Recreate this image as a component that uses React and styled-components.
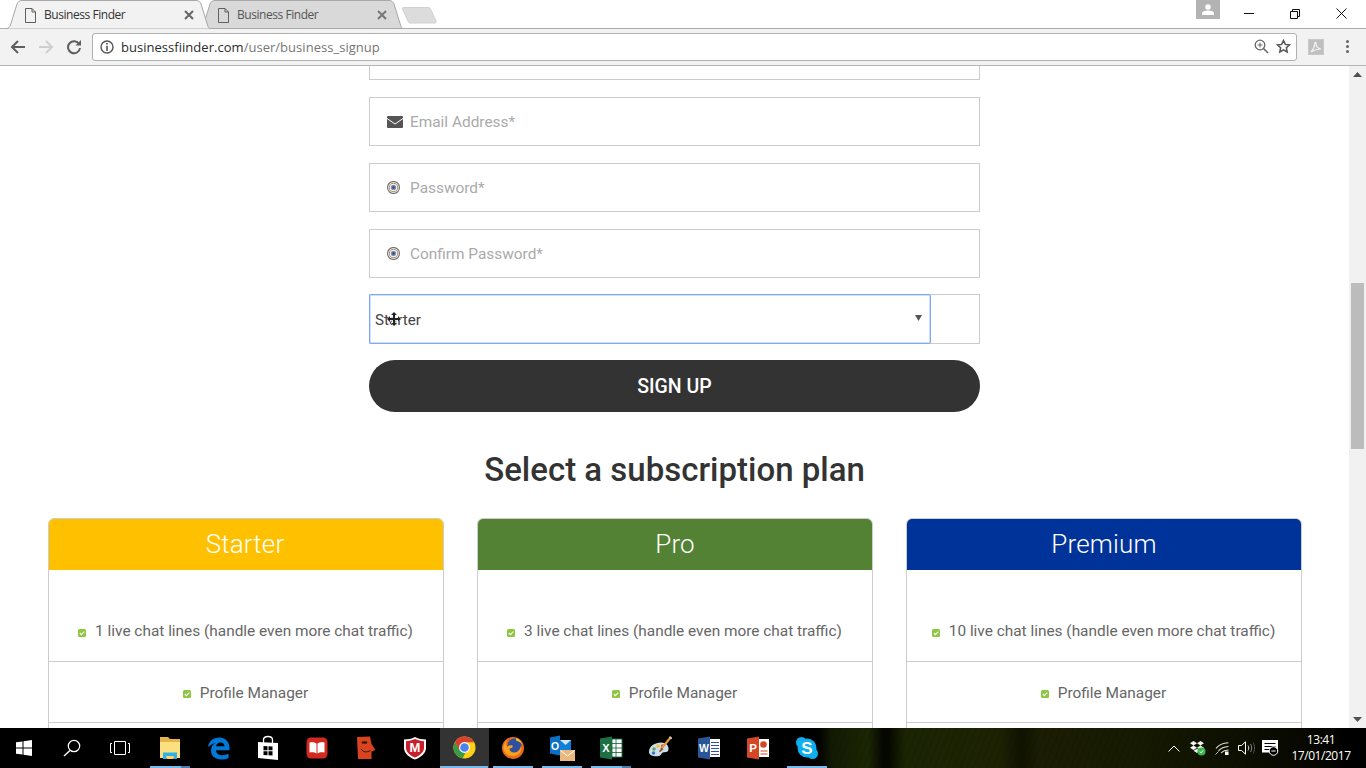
import React from 'react';
import styled, { createGlobalStyle } from 'styled-components';

const Global = createGlobalStyle`
  html, body { margin: 0; padding: 0; overflow: hidden; background: #fff; }
  * { box-sizing: border-box; }
`;

const Screen = styled.div`
  width: 1366px; height: 768px; display: flex; flex-direction: column; overflow: hidden;
  font-family: Roboto, "Open Sans", sans-serif;
`;

/* ---------- browser chrome ---------- */
const TabStrip = styled.div`
  height: 29px; flex: none; display: flex; align-items: flex-start; padding-left: 6px;
  background: #fff; border-bottom: 1px solid #adadad;
`;
const Tab = styled.div`
  position: relative; width: 205px; height: 29px; flex: none; display: flex; align-items: center;
  padding: 0 0 0 19px; margin-left: ${p => (p.$active ? '0' : '-12px')};
  z-index: ${p => (p.$active ? 2 : 1)};
`;
const TabShape = styled.svg`
  position: absolute; inset: 0; width: 205px; height: 29px; z-index: -1;
`;
const TabFavicon = styled.svg`
  width: 11px; height: 15px; flex: none; margin-right: 8px; margin-top: 1px;
`;
const TabTitle = styled.span`
  font: 12px/16px "Open Sans", sans-serif; width: 139px; flex: none; white-space: nowrap;
  letter-spacing: -0.45px; color: ${p => (p.$active ? '#333' : '#555')};
  margin-top: 1px;
`;
const TabClose = styled.svg`
  width: 10px; height: 10px; flex: none; margin-left: 1px; margin-top: 1px;
`;
const NewTab = styled.svg`
  width: 36px; height: 18px; flex: none; margin: 6px 0 0 -3px;
`;
const StripRight = styled.div`
  margin-left: auto; display: flex; align-items: flex-start; padding-right: 2px;
`;
const ProfileBadge = styled.div`
  width: 24px; height: 19px; background: #b3b3b3; margin-right: 6px;
  display: flex; align-items: center; justify-content: center;
`;
const WinButton = styled.div`
  width: 46px; height: 27px; display: flex; align-items: center; justify-content: center;
`;

const Toolbar = styled.div`
  height: 37px; flex: none; display: flex; align-items: center; padding: 0 16px 1px 4px;
  background: #f2f2f2; border-bottom: 1px solid #b4b4b4;
`;
const NavButton = styled.div`
  width: 28px; height: 28px; flex: none; display: flex; align-items: center; justify-content: center;
`;
const Omnibox = styled.div`
  flex: 1; height: 28px; margin-left: 4px; display: flex; align-items: center; padding: 0 5px 0 7px;
  background: #fff; border: 1px solid #b0b0b0; border-radius: 3px;
`;
const UrlText = styled.div`
  flex: 1; margin-left: 7px; font: 13px/18px "Open Sans", sans-serif; color: #767676;
  letter-spacing: 0.03px; font-variant-ligatures: none; white-space: nowrap;
`;
const UrlHost = styled.span`color: #2b2b2b;`;
const OmniIcon = styled.svg`
  flex: none; margin-left: ${p => p.$gap || 0}px;
`;
const PdfBadge = styled.div`
  width: 16px; height: 16px; flex: none; margin-left: 11px; background: #bfbfbf; border: 1px solid #c9c9c9;
  display: flex; align-items: center; justify-content: center;
`;
const Kebab = styled.div`
  width: 4px; flex: none; margin-left: 22px; display: flex; flex-direction: column; gap: 2px;
`;
const KebabDot = styled.span`
  width: 3px; height: 3px; background: #666; border-radius: 50%; display: block;
`;

/* ---------- viewport ---------- */
const Viewport = styled.div`
  flex: 1; min-height: 0; display: flex;
`;
const Page = styled.main`
  width: 1349px; flex: none; overflow: hidden; background: #fff;
`;
const Form = styled.form`
  width: 611px; margin: -35px auto 0; display: flex; flex-direction: column; gap: 17px;
`;
const Field = styled.div`
  height: ${p => (p.$bare ? 50 : 49)}px; margin-top: ${p => (p.$bare ? -1 : 0)}px;
  border: 1px solid #ccc; display: flex; align-items: center; padding-left: ${p => (p.$bare ? 0 : 17)}px;
  background: #fff;
`;
const FieldIcon = styled.span`
  width: 23px; flex: none; display: flex; align-items: center;
`;
const Placeholder = styled.span`
  font-size: 15.4px; color: #aaa;
`;
const PlanSelect = styled.div`
  position: relative; width: 562px; height: 50px; margin: -1px; display: flex; align-items: center; padding-left: 5px;
  border: 1px solid #7fa8f2; border-radius: 2px; box-shadow: inset 0 0 0 1px rgba(165, 198, 250, .55);
  font-size: 15.2px; color: #444; padding-top: 2px;
`;
const SelectCaret = styled.svg`
  margin-left: auto; margin-right: 8px; margin-top: -4px;
`;
const MoveCursor = styled.svg`
  position: absolute; left: 16px; top: 16px;
`;
const SignUp = styled.button`
  height: 52px; margin-top: -1px; border: 0; border-radius: 26px; background: #333; color: #fff;
  font: 500 19.5px Roboto, sans-serif; padding: 0; cursor: pointer;
`;
const Heading = styled.h2`
  margin: 38px 0 28px; font: 500 33px/40px Roboto, sans-serif; color: #333; text-align: center;
`;
const Plans = styled.div`
  display: grid; grid-template-columns: repeat(3, 396px); column-gap: 33px; padding-left: 48px;
`;
const Card = styled.section`
  border: 1px solid #ccc; border-radius: 6px 6px 0 0; overflow: hidden;
`;
const CardHead = styled.div`
  height: 51px; background: ${p => p.$color}; color: #fff; text-align: center;
  font: 300 26px/50px Roboto, sans-serif; letter-spacing: 0.15px; padding-right: ${p => p.$nudge}px;
`;
const FeatureRow = styled.div`
  height: ${p => p.$h}px; display: flex; align-items: ${p => (p.$low ? 'flex-end' : 'center')}; justify-content: center;
  padding: ${p => (p.$low ? '0 1px 21px 0' : '2px 1px 0 0')}; border-bottom: 1px solid #ccc;
  font-size: 15.4px; line-height: 18px; color: #666; gap: 9px;
`;
const Check = styled.svg`
  flex: none; margin-top: 2px; align-self: ${p => (p.$low ? 'flex-end' : 'center')};
  margin-bottom: ${p => (p.$low ? 3 : 0)}px;
`;

/* ---------- scrollbar ---------- */
const Scrollbar = styled.div`
  width: 17px; flex: none; background: #f1f1f1; display: flex; flex-direction: column;
`;
const ScrollArrow = styled.div`
  height: 17px; flex: none; display: flex; align-items: center; justify-content: center;
  margin-top: ${p => (p.$bottom ? 'auto' : 0)};
`;
const ScrollThumb = styled.div`
  width: 13px; height: 166px; margin: 200px 2px 0; background: #bcbcbc; flex: none;
`;

/* ---------- taskbar ---------- */
const Taskbar = styled.footer`
  height: 40px; flex: none; display: flex; align-items: stretch; color: #fff;
  background:
    repeating-linear-gradient(112deg, rgba(0,0,0,.07) 0 2px, transparent 2px 6px) 820px 0 no-repeat,
    linear-gradient(90deg, #000 0, #000 818px, #121a02 832px, #1b2603 868px, #040500 884px, #070900 889px, #1b2503 905px, #1d2203 1000px, #0f1300 1022px, #1b1e02 1040px, #161a02 1140px, #0d0f00 1240px, #060600 1320px, #000 1345px);
`;
const SysButton = styled.div`
  width: 48px; flex: none; display: flex; align-items: center; justify-content: center;
`;
const TaskSlot = styled.div`
  position: relative; width: 49px; flex: none; display: flex; align-items: center; justify-content: center;
  padding: 0 1px 1px 0; background: ${p => (p.$active ? '#333' : 'transparent')};
  &::after {
    content: ''; display: ${p => (p.$open ? 'block' : 'none')}; position: absolute; bottom: 0; height: 2px;
    left: ${p => (p.$active ? 0 : 4)}px; right: ${p => (p.$active ? 1 : 5)}px;
    background: ${p => (p.$split
      ? 'linear-gradient(90deg, #76b9ed 0 31px, #4b7ea8 31px)'
      : '#76b9ed')};
  }
`;
const TaskList = styled.div`
  display: flex; margin-left: 2px;
`;
const Tray = styled.div`
  margin-left: auto; display: flex; align-items: stretch; padding-right: 6px;
`;
const TraySlot = styled.div`
  width: 24px; display: flex; align-items: center; justify-content: center;
`;
const Clock = styled.div`
  width: 78px; display: flex; flex-direction: column; align-items: center; justify-content: center;
  font: 12px/16px "Open Sans", sans-serif; color: #fff; letter-spacing: -0.45px; padding-bottom: 1px;
`;

/* ---------- drawings ---------- */
const TabOutline = ({ active }) => (
  <TabShape viewBox="0 0 205 29">
    <path
      d={`M.5 28.5C2.5 28.5 3.5 27 4.5 25L11 4C12 1.6 13.5.5 16 .5H190C192.5.5 194 1.6 195 4L201.500 25C202 27 203 28.5 204.5 28.5${active ? '' : 'Z'}`}
      fill={active ? '#f2f2f2' : '#d9d9d9'} stroke="#a8a8a8" />
  </TabShape>
);
const DocIcon = () => (
  <TabFavicon viewBox="0 0 11 15">
    <path d="M.5.5H7L10.5 4V14.5H.5ZM7 .5V4H10.5" fill="none" stroke="#5f5f5f" />
  </TabFavicon>
);
const CloseX = ({ color }) => (
  <TabClose viewBox="0 0 10 10">
    <path d="M1 1L9 9M9 1L1 9" stroke={color} strokeWidth="2" />
  </TabClose>
);
const BackArrow = ({ color }) => (
  <svg width="16" height="14" viewBox="0 0 16 14">
    <path d="M15 7H2.5M8 1L2 7l6 6" fill="none" stroke={color} strokeWidth="2" />
  </svg>
);
const ForwardArrow = ({ color }) => (
  <svg width="16" height="14" viewBox="0 0 16 14">
    <path d="M1 7H13.5M8 1l6 6-6 6" fill="none" stroke={color} strokeWidth="2" />
  </svg>
);
const Reload = () => (
  <svg width="16" height="16" viewBox="0 0 16 16">
    <path d="M13.2 5.2A6 6 0 1 0 14 9" fill="none" stroke="#5f5f5f" strokeWidth="2" />
    <path d="M9.5 6.5H15V1Z" fill="#5f5f5f" />
  </svg>
);
const InfoIcon = () => (
  <svg width="14" height="14" viewBox="0 0 14 14" style={{ flex: 'none' }}>
    <circle cx="7" cy="7" r="6" fill="none" stroke="#555" strokeWidth="1.4" />
    <path d="M6.2 3h1.6v1.6H6.2zM6.2 5.8h1.6V11H6.2z" fill="#555" />
  </svg>
);

const tasks = [
  { id: 'explorer', open: true, split: true, icon: (
    <svg width="24" height="24" viewBox="0 0 24 24">
      <path d="M2 1h8l2 2h10v4H2z" fill="#e2b64b" />
      <rect x="2" y="6" width="20" height="16" fill="#fbdf80" />
      <path d="M5 23v-6.500h14V23h-3.500v-3h-7v3z" fill="#2fb0ea" />
      <rect x="8.500" y="20" width="7" height="3" fill="#f6d66a" />
    </svg>) },
  { id: 'edge', icon: (
    <svg width="24" height="24" viewBox="0 0 24 24">
      <path fill="#0078d7" d="M1 11C2 5 6.500 1.500 12 1.500c6.500 0 10.500 4.500 10.500 10.500v2.200H9c.3 3.300 2.800 5 6 5 2.400 0 4.500-.6 6.500-1.700v4.500c-2 1-4.300 1.500-7 1.500-6.500 0-10.500-3.700-10.500-9 0-3.300 1.500-6 4.500-7.800C6 7.500 3.500 9 1 11zM9 10.300h8.500c0-2.300-1.700-3.800-4-3.800-2.400 0-4 1.600-4.500 3.800z" />
    </svg>) },
  { id: 'store', icon: (
    <svg width="24" height="26" viewBox="0 0 24 26">
      <path d="M7.500 8V5c0-2.200 2-3.500 4.500-3.500S16.500 2.800 16.500 5v3" fill="none" stroke="#fff" strokeWidth="1.300" />
      <path d="M2 7l20 1v17L2 23z" fill="#fff" />
      <path d="M7.500 11l4 .2v4h-4zM12.500 11.200l4 .2v3.800h-4zM7.500 16.200h4v4l-4-.2zM12.500 16.200h4v4.200l-4-.2z" fill="#000" />
    </svg>) },
  { id: 'reader', icon: (
    <svg width="22" height="22" viewBox="0 0 22 22">
      <rect width="21" height="21" x=".5" y=".5" rx="4.500" fill="#d12a20" />
      <path d="M10.500 6.500C8.500 5 6 5 3.500 5.500v10c2.500-.5 5-.5 7 1zM11.500 6.500c2-1.500 4.500-1.500 7-1v10c-2.500-.5-5-.5-7 1z" fill="#fff" />
    </svg>) },
  { id: 'face', icon: (
    <svg width="20" height="24" viewBox="0 0 20 24">
      <path d="M1 1l13-.5 1.500 7.500 4 6-4 1.500V23H2z" fill="#d9431e" />
      <ellipse cx="8.500" cy="6.500" rx="3" ry="1.300" fill="#2a1b12" />
      <path d="M5 13c2.500 3.500 6 3.500 9.500 1.500" fill="none" stroke="#2a1b12" strokeWidth="1" />
    </svg>) },
  { id: 'mcafee', icon: (
    <svg width="24" height="24" viewBox="0 0 24 24">
      <path d="M12 1c3.500 1.800 7 2.500 11 2.500V12c0 5-5 9.500-11 11.500C6 21.500 1 17 1 12V3.500C5 3.500 8.500 2.800 12 1z" fill="#fff" />
      <path d="M12 3c3 1.300 6 2 9 2.200V12c0 4-4.300 7.800-9 9.600C7.300 19.800 3 16 3 12V5.200C6 5 9 4.300 12 3z" fill="#c8202a" />
      <text x="12" y="16" textAnchor="middle" fontFamily="Liberation Sans, sans-serif" fontWeight="700" fontSize="13" fill="#fff">M</text>
    </svg>) },
  { id: 'chrome', open: true, active: true, icon: (
    <svg width="23" height="23" viewBox="0 0 24 24">
      <circle cx="12" cy="12" r="11.500" fill="#fcd116" />
      <path d="M2 6.300A11.500 11.500 0 0 0 10 23.300L14.500 14.500H7.500z" fill="#3a9a45" />
      <path d="M12 .5A11.500 11.500 0 0 1 22 6.500H12L7 14.800 2 6.300A11.500 11.500 0 0 1 12 .5z" fill="#d8402f" />
      <circle cx="12" cy="12" r="5.700" fill="#fff" />
      <circle cx="12" cy="12" r="4.500" fill="#4a84e8" />
    </svg>) },
  { id: 'firefox', open: true, icon: (
    <svg width="24" height="24" viewBox="0 0 24 24">
      <circle cx="12" cy="12" r="11" fill="#e9691d" />
      <circle cx="13.500" cy="9.500" r="7" fill="#2f4f9f" />
      <path d="M6 3c-1 3-1.500 6 .5 8 .5-2 3-2 5-1.500 1 2-1 3-3 3 0 3 3 5 6 4 3-1 5-3.500 5-6.500 2 4-1 10-7.500 10C6 20 2 16 2.500 10.500 3 8 4.500 5 6 3z" fill="#f7a11e" />
      <path d="M15 2c3 1 5 3 6 6-2-2-4-3-6-3.500z" fill="#f7c22e" />
    </svg>) },
  { id: 'outlook', open: true, icon: (
    <svg width="26" height="26" viewBox="0 0 26 26">
      <path d="M1 2.500L11 .5v20L1 18.500z" fill="#0a72c6" />
      <rect x="11" y="5" width="11" height="10" fill="#0f7fd8" />
      <path d="M11 5h11l-5.500 5z" fill="#cfe6f8" />
      <text x="6" y="14.500" textAnchor="middle" fontFamily="Liberation Sans, sans-serif" fontWeight="700" fontSize="10.500" fill="#fff">O</text>
      <rect x="11" y="15" width="15" height="11" fill="#ebb87e" />
      <path d="M11.500 15.500l7 5.500 7-5.500" fill="none" stroke="#fff" strokeWidth="1" />
    </svg>) },
  { id: 'excel', open: true, split: true, icon: (
    <svg width="24" height="24" viewBox="0 0 24 24">
      <path d="M1 2.500L13 .5v23L1 21.500z" fill="#1d7044" />
      <rect x="13" y="3" width="10" height="18" fill="#fff" />
      <path d="M13 3h10v18H13zM17 3v18M13 7.500h10M13 12h10M13 16.500h10" fill="none" stroke="#1d7044" strokeWidth=".9" />
      <text x="7" y="16" textAnchor="middle" fontFamily="Liberation Sans, sans-serif" fontWeight="700" fontSize="11" fill="#fff">X</text>
    </svg>) },
  { id: 'paint', icon: (
    <svg width="24" height="24" viewBox="0 0 24 24">
      <path d="M1 16C1 10 7 6.500 13 6.500c5 0 8 3 7.500 7-.5 3-3.500 2.500-5.500 3-2 .5-1.500 3-4 3.500C7 20.800 1 20 1 16z" fill="#cfdcec" />
      <circle cx="6" cy="13" r="1.700" fill="#5aa84a" />
      <circle cx="10" cy="10" r="1.700" fill="#e4c534" />
      <circle cx="14.500" cy="10" r="1.700" fill="#dd4b39" />
      <circle cx="5.500" cy="17" r="1.700" fill="#3a77c8" />
      <path d="M23 1L13 13" stroke="#e49a3c" strokeWidth="2.200" />
      <path d="M21.500 .8L23.800 2.600" stroke="#d0d0d0" strokeWidth="1.500" />
      <path d="M13.500 11.500l2 1.700-3.500 3-1-.8z" fill="#8a5a2b" />
    </svg>) },
  { id: 'word', icon: (
    <svg width="24" height="24" viewBox="0 0 24 24">
      <path d="M1 2.500L13 .5v23L1 21.500z" fill="#2b579a" />
      <rect x="13" y="3" width="10" height="18" fill="#fff" />
      <path d="M14 6.500h8M14 9.500h8M14 12.500h8M14 15.500h8M14 18.500h8" stroke="#2b579a" strokeWidth="1.100" />
      <text x="7" y="16" textAnchor="middle" fontFamily="Liberation Sans, sans-serif" fontWeight="700" fontSize="10.500" fill="#fff">W</text>
    </svg>) },
  { id: 'powerpoint', icon: (
    <svg width="24" height="24" viewBox="0 0 24 24">
      <path d="M1 2.500L13 .5v23L1 21.500z" fill="#d24726" />
      <rect x="13" y="3" width="10" height="18" fill="#fff" />
      <circle cx="17.500" cy="8.500" r="3.300" fill="#d24726" />
      <path d="M14.500 15h7M14.500 18h7" stroke="#d24726" strokeWidth="1.200" />
      <text x="7" y="16" textAnchor="middle" fontFamily="Liberation Sans, sans-serif" fontWeight="700" fontSize="11.500" fill="#fff">P</text>
    </svg>) },
  { id: 'skype', open: true, icon: (
    <svg width="24" height="24" viewBox="0 0 24 24">
      <circle cx="12" cy="12" r="9.500" fill="#0eaff0" />
      <circle cx="6.500" cy="6.500" r="5.500" fill="#0eaff0" />
      <circle cx="17.500" cy="17.500" r="5.500" fill="#0eaff0" />
      <text x="12" y="18" textAnchor="middle" fontFamily="Liberation Sans, sans-serif" fontWeight="700" fontSize="17" fill="#fff">S</text>
    </svg>) },
];

const plans = [
  { name: 'Starter', color: '#ffc000', lines: 1, nudge: 2 },
  { name: 'Pro', color: '#548235', lines: 3, nudge: 0 },
  { name: 'Premium', color: '#003399', lines: 10, nudge: 0 },
];

const CheckBox = ({ low }) => (
  <Check $low={low} width="8" height="8" viewBox="0 0 8 8">
    <rect width="8" height="8" rx="1.500" fill="#8dc63f" />
    <path d="M1.800 4l1.600 1.600L6.300 2.600" fill="none" stroke="#fff" strokeWidth="1.100" />
  </Check>
);
const Envelope = () => (
  <svg width="16" height="12" viewBox="0 0 16 12">
    <rect width="16" height="12" rx="1" fill="#555" />
    <path d="M0 2.500L8 8l8-5.500" fill="none" stroke="#fff" strokeWidth="1" />
  </svg>
);
const Target = () => (
  <svg width="13" height="13" viewBox="0 0 13 13">
    <circle cx="6.500" cy="6.500" r="6" fill="#f1ece6" stroke="#757575" strokeWidth="1.100" />
    <circle cx="6.500" cy="6.500" r="4.100" fill="#fff" stroke="#b08a62" strokeWidth="1" />
    <circle cx="6.500" cy="6.500" r="2.700" fill="#6f8fc4" />
    <circle cx="6.500" cy="6.500" r="1.300" fill="#4e4a4a" />
  </svg>
);

export default function App() {
  return (
    <Screen>
      <Global />
      <TabStrip>
        <Tab $active>
          <TabOutline active />
          <DocIcon />
          <TabTitle $active>Business Finder</TabTitle>
          <CloseX color="#666" />
        </Tab>
        <Tab>
          <TabOutline />
          <DocIcon />
          <TabTitle>Business Finder</TabTitle>
          <CloseX color="#777" />
        </Tab>
        <NewTab viewBox="0 0 36 18">
          <path d="M2.500 1.500H27C28.500 1.500 29 2 29.500 3L35 15C35.500 16.500 35 17 33.500 17H9.500C8 17 7.500 16.500 7 15L1.500 3C1 2 1.500 1.500 2.500 1.500Z" fill="#dcdcdc" stroke="#d0d0d0" />
        </NewTab>
        <StripRight>
          <ProfileBadge>
            <svg width="12" height="11" viewBox="0 0 12 11">
              <circle cx="6" cy="3" r="2.800" fill="#fff" />
              <path d="M0 11V9c0-1.500 3-2.500 6-2.500S12 7.500 12 9v2z" fill="#fff" />
            </svg>
          </ProfileBadge>
          <WinButton>
            <svg width="10" height="1" viewBox="0 0 10 1"><rect width="10" height="1" fill="#111" /></svg>
          </WinButton>
          <WinButton>
            <svg width="10" height="10" viewBox="0 0 10 10">
              <path d="M.5 2.500h7v7h-7zM2.500 2.500v-2h7v7h-2" fill="none" stroke="#111" />
            </svg>
          </WinButton>
          <WinButton>
            <svg width="11" height="11" viewBox="0 0 11 11">
              <path d="M.5.500l10 10M10.500.500l-10 10" stroke="#111" />
            </svg>
          </WinButton>
        </StripRight>
      </TabStrip>

      <Toolbar>
        <NavButton><BackArrow color="#5f5f5f" /></NavButton>
        <NavButton><ForwardArrow color="#cfcfcf" /></NavButton>
        <NavButton><Reload /></NavButton>
        <Omnibox>
          <InfoIcon />
          <UrlText><UrlHost>businessfiinder.com</UrlHost>/user/business_signup</UrlText>
          <OmniIcon width="15" height="15" viewBox="0 0 15 15">
            <circle cx="6" cy="6" r="4.800" fill="none" stroke="#666" strokeWidth="1.300" />
            <path d="M9.500 9.500L14 14" stroke="#666" strokeWidth="1.600" />
            <path d="M3.500 6h5M6 3.500v5" stroke="#666" />
          </OmniIcon>
          <OmniIcon $gap={7} width="15" height="15" viewBox="0 0 15 15">
            <path d="M7.500 1.500l1.800 3.900 4.200.5-3.100 2.900.8 4.200-3.700-2.100-3.700 2.100.8-4.200L1.500 5.900l4.200-.5z" fill="none" stroke="#555" strokeWidth="1.500" />
          </OmniIcon>
        </Omnibox>
        <PdfBadge>
          <svg width="12" height="12" viewBox="0 0 12 12">
            <path d="M1 11c2-2 3.500-5 4-9 0-1 1-1 1 0 0 3 2 5.500 5 6-3 0-6 .5-10 3z" fill="none" stroke="#f2f2f2" strokeWidth="1.200" />
          </svg>
        </PdfBadge>
        <Kebab><KebabDot /><KebabDot /><KebabDot /></Kebab>
      </Toolbar>

      <Viewport>
        <Page>
          <Form as="div">
            <Field />
            <Field>
              <FieldIcon><Envelope /></FieldIcon>
              <Placeholder>Email Address*</Placeholder>
            </Field>
            <Field>
              <FieldIcon><Target /></FieldIcon>
              <Placeholder>Password*</Placeholder>
            </Field>
            <Field>
              <FieldIcon><Target /></FieldIcon>
              <Placeholder>Confirm Password*</Placeholder>
            </Field>
            <Field $bare>
              <PlanSelect>
                Starter
                <SelectCaret width="7" height="6" viewBox="0 0 7 6"><path d="M0 0h7L3.500 6z" fill="#555" /></SelectCaret>
                <MoveCursor width="16" height="16" viewBox="0 0 16 16">
                  <path d="M8 1L11 4H9V7H12V5L15 8L12 11V9H9V12H11L8 15L5 12H7V9H4V11L1 8L4 5V7H7V4H5Z" fill="#222" stroke="#fff" strokeWidth="1" paintOrder="stroke" />
                </MoveCursor>
              </PlanSelect>
            </Field>
            <SignUp type="button">SIGN UP</SignUp>
          </Form>
          <Heading>Select a subscription plan</Heading>
          <Plans>
            {plans.map(plan => (
              <Card key={plan.name}>
                <CardHead $color={plan.color} $nudge={plan.nudge}>{plan.name}</CardHead>
                <FeatureRow $h={92} $low>
                  <CheckBox low />
                  <span>{plan.lines} live chat lines (handle even more chat traffic)</span>
                </FeatureRow>
                <FeatureRow $h={61}>
                  <CheckBox />
                  <span>Profile Manager</span>
                </FeatureRow>
                <FeatureRow $h={61} />
              </Card>
            ))}
          </Plans>
        </Page>
        <Scrollbar>
          <ScrollArrow>
            <svg width="9" height="5" viewBox="0 0 9 5"><path d="M0 5L4.500 0 9 5z" fill="#505050" /></svg>
          </ScrollArrow>
          <ScrollThumb />
          <ScrollArrow $bottom>
            <svg width="9" height="5" viewBox="0 0 9 5"><path d="M0 0h9L4.500 5z" fill="#505050" /></svg>
          </ScrollArrow>
        </Scrollbar>
      </Viewport>

      <Taskbar>
        <SysButton>
          <svg width="16" height="16" viewBox="0 0 16 16">
            <path d="M0 2.300L6.500 1.400V7.500H0zM7.500 1.200L16 0V7.500H7.500zM0 8.500H6.500V14.600L0 13.700zM7.500 8.500H16V16L7.500 14.800z" fill="#fff" />
          </svg>
        </SysButton>
        <SysButton>
          <svg width="18" height="18" viewBox="0 0 18 18">
            <circle cx="11" cy="7" r="5.700" fill="none" stroke="#fff" strokeWidth="1.200" />
            <path d="M7 11.500L1 17" stroke="#fff" strokeWidth="1.400" />
          </svg>
        </SysButton>
        <SysButton>
          <svg width="20" height="14" viewBox="0 0 20 14">
            <path d="M4.500.500h11v13h-11zM2 2.500H.5v9H2M18 2.500h1.500v9H18" fill="none" stroke="#fff" />
          </svg>
        </SysButton>
        <TaskList>
          {tasks.map(t => (
            <TaskSlot key={t.id} $open={t.open} $active={t.active} $split={t.split}>{t.icon}</TaskSlot>
          ))}
        </TaskList>
        <Tray>
          <TraySlot>
            <svg width="12" height="7" viewBox="0 0 12 7"><path d="M.5 6.500L6 1l5.500 5.500" fill="none" stroke="#fff" /></svg>
          </TraySlot>
          <TraySlot>
            <svg width="16" height="15" viewBox="0 0 16 15">
              <path d="M3.500 0L7 2.200 3.500 4.500 0 2.200zM10.500 0L14 2.200l-3.500 2.300L7 2.200zM3.500 4.500L7 6.700 3.500 9 0 6.700zM10.500 4.500L14 6.700 10.500 9 7 6.700zM3.500 9.800L7 7.700l3.500 2.100L7 12z" fill="#f4f4f4" />
              <circle cx="11.500" cy="10.500" r="4" fill="#3cb54a" />
              <path d="M9.700 10.500l1.300 1.300 2.300-2.500" fill="none" stroke="#fff" />
            </svg>
          </TraySlot>
          <TraySlot>
            <svg width="14" height="13" viewBox="0 0 14 13">
              <path d="M1 6.500C3.500 3 8 1 13.500 .7M3.500 8.800C5.500 6.500 9 4.800 13.500 4.500M6 10.800C7.500 9.500 10 8.200 13.500 8" fill="none" stroke="#e4e4e4" strokeWidth="1.100" />
              <rect x="10" y="9.500" width="3.500" height="3.500" fill="#fff" />
              <path d="M.5 12.500l3-3" stroke="#bbb" />
            </svg>
          </TraySlot>
          <TraySlot>
            <svg width="17" height="14" viewBox="0 0 17 14">
              <path d="M.5 4.500h3L7.500.8v12.400l-4-3.700h-3z" fill="none" stroke="#fff" />
              <path d="M10 4.500c1 1.500 1 3.500 0 5" fill="none" stroke="#ddd" />
              <path d="M12.500 3c1.600 2.500 1.600 5.500 0 8" fill="none" stroke="#888" />
              <path d="M15 1.500c2 3 2 8 0 11" fill="none" stroke="#555" />
            </svg>
          </TraySlot>
          <TraySlot>
            <svg width="17" height="16" viewBox="0 0 17 16">
              <rect width="16" height="12.500" fill="#fff" />
              <path d="M2.500 3.500h11M2.500 6.500h11M2.500 9.500h6" stroke="#000" />
              <circle cx="11.500" cy="11" r="4.300" fill="#000" stroke="#fff" />
              <path d="M9.300 11h4.400" stroke="#fff" />
            </svg>
          </TraySlot>
          <Clock>
            <span>13:41</span>
            <span>17/01/2017</span>
          </Clock>
        </Tray>
      </Taskbar>
    </Screen>
  );
}
